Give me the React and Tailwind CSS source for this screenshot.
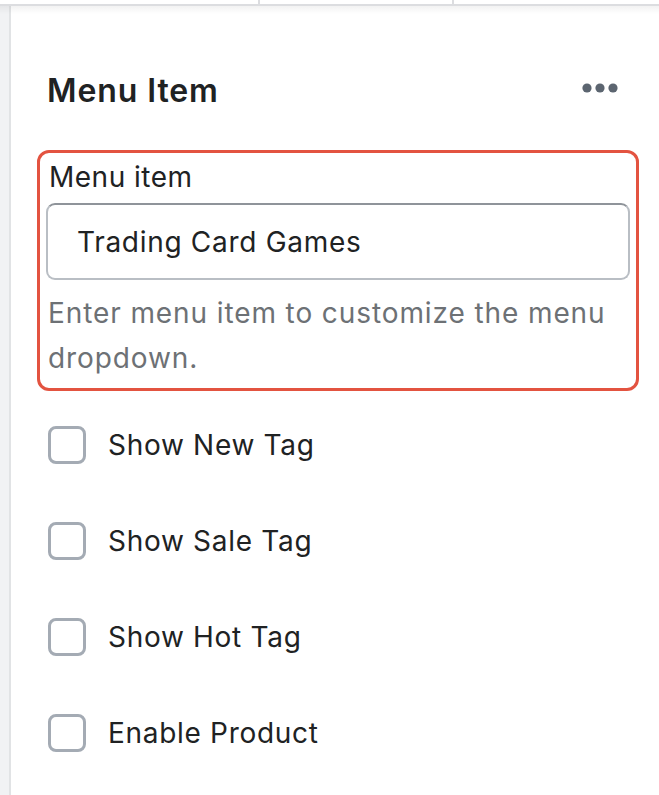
const options = ['Show New Tag', 'Show Sale Tag', 'Show Hot Tag', 'Enable Product'];

function DotsIcon() {
  return (
    <svg width="40" height="12" viewBox="0 0 40 12" className="text-[#5c6570]">
      <circle cx="7" cy="6" r="4.6" fill="currentColor" />
      <circle cx="20" cy="6" r="4.6" fill="currentColor" />
      <circle cx="33" cy="6" r="4.6" fill="currentColor" />
    </svg>
  );
}

function Checkbox({ label }) {
  return (
    <label className="flex h-[38px] items-center gap-[22px]">
      <span className="h-[38px] w-[38px] shrink-0 rounded-[8px] border-[3px] border-[#a4abb4] bg-white" />
      <span className="text-[28px] leading-[36px] tracking-[0.7px] text-[#202223]">{label}</span>
    </label>
  );
}

export default function App() {
  return (
    <div
      className="relative h-[795px] w-[659px] overflow-hidden bg-white"
      style={{ fontFamily: 'Inter, "Noto Sans", sans-serif' }}
    >
      {/* Tab strip at the top */}
      <div className="flex h-[6px] border-b-2 border-[#dcdde0]">
        <div className="w-[260px] border-r-2 border-[#dcdde0]" />
        <div className="w-[194px] border-r-2 border-[#dcdde0]" />
        <div className="flex-1" />
      </div>
      <div className="pointer-events-none absolute left-0 right-0 top-[6px] h-[8px] bg-gradient-to-b from-[#0000000d] to-transparent" />

      <div className="flex h-[789px]">
        <div className="w-[11px] shrink-0 border-r-2 border-[#e1e3e5] bg-[#f1f2f4]" />

        <div className="flex-1 pl-[26px] pr-[20px]">
          {/* Header */}
          <div className="mt-[65px] flex items-center justify-between pl-[10px]">
            <h2 className="text-[32px] font-semibold leading-[40px] tracking-[0.9px] text-[#202223]">Menu Item</h2>
            <div className="mr-[19px] -mt-[6px]">
              <DotsIcon />
            </div>
          </div>

          {/* Highlighted field */}
          <div className="mt-[39px] rounded-[12px] border-[3px] border-[#e35340] px-[6px] pb-[7px] pt-[6px]">
            <div className="pl-[3px] text-[28px] leading-[36px] tracking-[0.5px] text-[#202223]">Menu item</div>
            <div className="mt-[8px] flex h-[77px] items-center rounded-[9px] border-2 border-[#b9bec4] border-t-[#8f949a] px-[29px]">
              <span className="text-[28px] tracking-[0.7px] text-[#202223]">Trading Card Games</span>
            </div>
            <p className="mt-[11px] pl-[2px] text-[28px] leading-[45px] tracking-[0.9px] text-[#6d7175]">
              Enter menu item to customize the menu dropdown.
            </p>
          </div>

          {/* Options */}
          <div className="mt-[35px] flex flex-col gap-[58px] pl-[11px]">
            {options.map((o) => (
              <Checkbox key={o} label={o} />
            ))}
          </div>
        </div>
      </div>
    </div>
  );
}
